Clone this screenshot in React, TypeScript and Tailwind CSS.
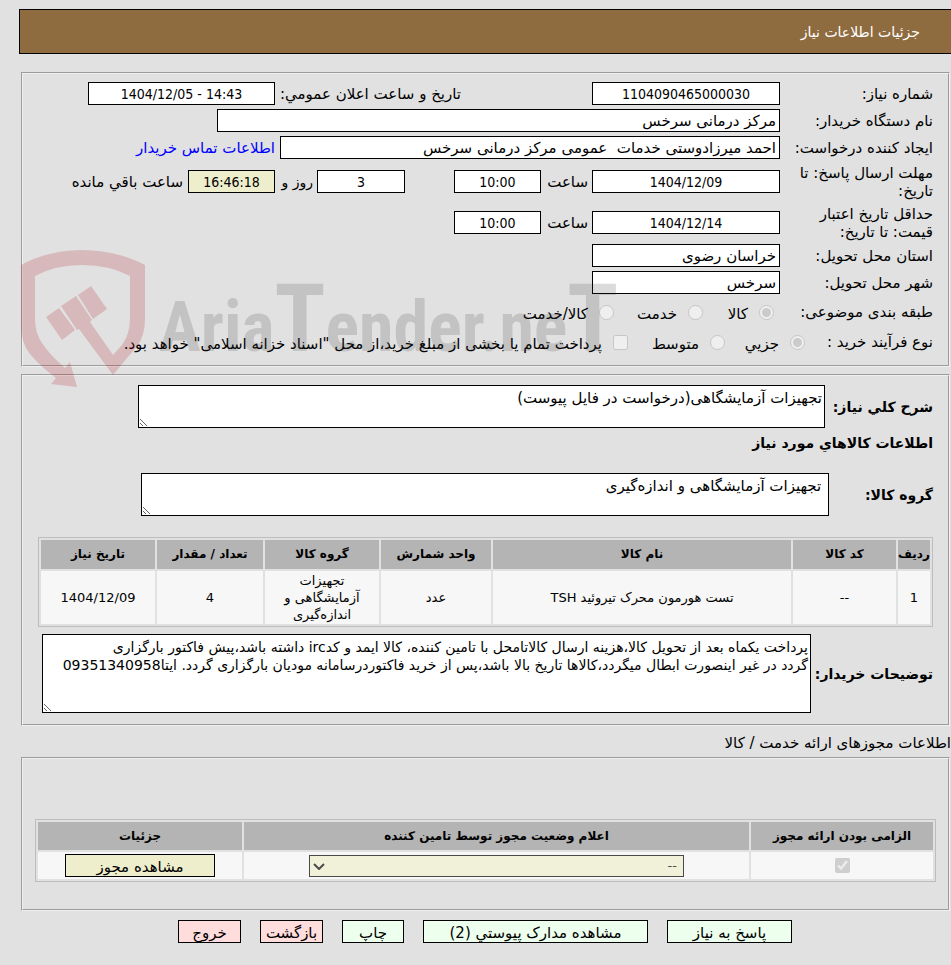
import type { ReactNode } from 'react'

const GOODS_COLUMNS = [
  { label: 'ردیف', width: 'w-[32px]' },
  { label: 'کد کالا', width: 'w-[103px]' },
  { label: 'نام کالا', width: '' },
  { label: 'واحد شمارش', width: 'w-[110px]' },
  { label: 'گروه کالا', width: 'w-[114px]' },
  { label: 'تعداد / مقدار', width: 'w-[106px]' },
  { label: 'تاریخ نیاز', width: 'w-[114px]' },
]

const GOODS_ROWS = [
  ['1', '--', 'تست هورمون محرک تیروئید TSH', 'عدد', 'تجهیزات آزمایشگاهی و اندازه‌گیری', '4', '1404/12/09'],
]

const BUYER_NOTES = `پرداخت یکماه بعد از تحویل کالا،هزینه ارسال کالاتامحل با تامین کننده، کالا ایمد و کدirc داشته باشد،پیش فاکتور بارگزاری
گردد در غیر اینصورت ابطال میگردد،کالاها تاریخ بالا باشد،پس از خرید فاکتوردرسامانه مودیان بارگزاری گردد. ایتا09351340958`

const ACTIONS = [
  { label: 'پاسخ به نیاز', style: 'w-[125px] bg-[#edffed]' },
  { label: 'مشاهده مدارک پیوستي (2)', style: 'w-[225px] bg-[#edffed]' },
  { label: 'چاپ', style: 'w-[62px] bg-[#edffed]' },
  { label: 'بازگشت', style: 'w-[63px] bg-[#ffdddd]' },
  { label: 'خروج', style: 'w-[63px] bg-[#ffdddd]' },
]

const field = 'h-[23px] border border-black bg-white px-[3px]'
const numeric = "h-[23px] border border-black text-center font-['DejaVu_Sans_Condensed','DejaVu_Sans',sans-serif] text-[14px]"
const area = 'block border border-black bg-white px-[2px] pt-[3px] leading-[18px]'

function Section({ className, children }: { className: string; children: ReactNode }) {
  return (
    <fieldset className={`mr-[1px] ml-[2px] border-2 border-[#f0f0f0] [border-style:groove] ${className}`}>
      {children}
    </fieldset>
  )
}

function Row({ id, label, className, children }: { id: string; label: string; className: string; children: ReactNode }) {
  return (
    <div className={`flex items-center ${className}`}>
      <label htmlFor={id} className="w-[153px] shrink-0 leading-[18px]">
        <span className="block w-[140px]">{label}</span>
      </label>
      {children}
    </div>
  )
}

function Choice({ name, label, checked, type = 'radio', className }: {
  name: string
  label: string
  checked?: boolean
  type?: 'radio' | 'checkbox'
  className: string
}) {
  return (
    <label className={`flex items-center gap-[11px] whitespace-nowrap ${className}`}>
      <input type={type} name={name} defaultChecked={checked} disabled className="size-[15px] shrink-0" />
      <span className="pt-[4px]">{label}</span>
    </label>
  )
}

function Watermark() {
  return (
    <svg
      className="pointer-events-none absolute top-[178px] left-[2px] h-[138px] w-[600px] overflow-visible"
      viewBox="0 0 600 138"
      aria-hidden="true"
    >
      <g fill="#b01e28" opacity="0.2">
        <path d="M0 15 Q28 0 61 0 Q95 0 124 15 V68 Q124 86 116 96 L92 125 L58 79 L56 80 L40 56 L55 46 L71 70 L69 72 L92 105 L101 95 Q109 84 109 68 V26 Q88 15 61 15 Q34 15 14 26 V68 Q14 83 21 93 Q28 104 44 118 L49 112 L56 137 L30 134 L35 128 Q18 115 9 104 Q0 93 0 76 Z" />
        <path d="M25 67L38 58L54 80L41 90Z M57 45L70 36L86 59L72 69Z" />
      </g>
      <text
        x="138"
        y="101"
        fill="#333333"
        opacity="0.17"
        fontFamily="'Roboto Condensed', Roboto, 'Liberation Sans', sans-serif"
        fontWeight="bold"
        fontSize="70"
        direction="ltr"
      >
        Aria<tspan fontSize="94">T</tspan>ender.ne<tspan fontSize="94">T</tspan>
      </text>
    </svg>
  )
}

export default function App() {
  return (
    <div
      dir="rtl"
      className="min-h-screen overflow-hidden bg-[#e1e1e1] pt-[9px] pb-[22px] pl-[19px] font-['DejaVu_Sans',sans-serif] text-[15px] leading-[18px] text-black"
    >
      <header className="flex h-[45px] items-center border border-r-0 border-black bg-[#8f6c40] pr-[31px] text-white">
        <h1 className="text-[14px]">جزئیات اطلاعات نیاز</h1>
      </header>

      <div className="relative mt-[18px]">
        <Section className="h-[295px] pt-[8px] pr-[15px] whitespace-nowrap">
          <Row id="need-no" label="شماره نیاز:" className="mb-[4px]">
            <input id="need-no" readOnly defaultValue="1104090465000030" className={`${numeric} w-[188px] bg-white`} />
            <label htmlFor="announced" className="mr-[131px] w-[186px]">تاریخ و ساعت اعلان عمومي:</label>
            <input id="announced" readOnly dir="ltr" defaultValue="1404/12/05 - 14:43" className={`${numeric} w-[187px] bg-white`} />
          </Row>
          <Row id="buyer" label="نام دستگاه خریدار:" className="mb-[4px]">
            <input id="buyer" readOnly defaultValue="مرکز درمانی سرخس" className={`${field} w-[563px]`} />
          </Row>
          <Row id="creator" label="ایجاد کننده درخواست:" className="mb-[4px]">
            <input id="creator" readOnly defaultValue="احمد میرزادوستی خدمات  عمومی مرکز درمانی سرخس" className={`${field} w-[500px]`} />
            <a href="#contact" className="mr-[5px] text-[#0000ff]">اطلاعات تماس خریدار</a>
          </Row>
          <Row id="deadline" label="مهلت ارسال پاسخ: تا تاریخ:" className="mb-[4px] h-[37px] whitespace-normal">
            <input id="deadline" readOnly defaultValue="1404/12/09" className={`${numeric} w-[188px] bg-white`} />
            <label htmlFor="deadline-time" className="mr-[4px] w-[47px]">ساعت</label>
            <input id="deadline-time" readOnly defaultValue="10:00" className={`${numeric} w-[87px] bg-white`} />
            <input id="days" readOnly defaultValue="3" className={`${numeric} mr-[49px] w-[88px] bg-white`} />
            <label htmlFor="days" className="mr-[4px] w-[38px] text-[14px] whitespace-nowrap">روز و</label>
            <input id="left" readOnly defaultValue="16:46:18" className={`${numeric} w-[87px] bg-[#eeeecc]`} />
            <label htmlFor="left" className="mr-[5px] whitespace-nowrap">ساعت باقي مانده</label>
          </Row>
          <Row id="valid" label="حداقل تاریخ اعتبار قیمت: تا تاریخ:" className="mb-[3px] h-[37px] whitespace-normal">
            <input id="valid" readOnly defaultValue="1404/12/14" className={`${numeric} w-[188px] bg-white`} />
            <label htmlFor="valid-time" className="mr-[4px] w-[47px]">ساعت</label>
            <input id="valid-time" readOnly defaultValue="10:00" className={`${numeric} w-[87px] bg-white`} />
          </Row>
          <Row id="province" label="استان محل تحویل:" className="mb-[4px]">
            <input id="province" readOnly defaultValue="خراسان رضوی" className={`${field} w-[188px]`} />
          </Row>
          <Row id="city" label="شهر محل تحویل:" className="mb-[3px]">
            <input id="city" readOnly defaultValue="سرخس" className={`${field} w-[188px]`} />
          </Row>
          <div role="group" aria-label="طبقه بندی موضوعی" className="flex h-[30px] items-center">
            <span className="w-[159px]">طبقه بندی موضوعی:</span>
            <Choice name="subject" label="کالا" checked className="w-[71px]" />
            <Choice name="subject" label="خدمت" className="w-[89px]" />
            <Choice name="subject" label="کالا/خدمت" className="" />
          </div>
          <div role="group" aria-label="نوع فرآیند خرید" className="flex h-[30px] items-center">
            <span className="w-[128px]">نوع فرآیند خرید :</span>
            <Choice name="process" label="جزیي" checked className="w-[80px]" />
            <Choice name="process" label="متوسط" className="w-[97px]" />
            <Choice
              name="treasury"
              type="checkbox"
              label={'پرداخت تمام یا بخشی از مبلغ خرید،از محل "اسناد خزانه اسلامی" خواهد بود.'}
              className=""
            />
          </div>
        </Section>
        <Watermark />
      </div>

      <Section className="mt-[7px] pt-[9px] pr-[15px] pb-[11px]">
        <div className="flex items-center">
          <label htmlFor="summary" className="w-[108px] shrink-0 text-[14px] font-bold">شرح کلي نیاز:</label>
          <textarea id="summary" readOnly defaultValue="تجهیزات آزمایشگاهی(درخواست در فایل پیوست)" className={`${area} ml-[115px] h-[43px] min-w-0 flex-1`} />
        </div>
        <h2 className="mt-[6px] text-[14px] font-bold">اطلاعات کالاهاي مورد نیاز</h2>
        <div className="mt-[21px] flex items-center">
          <label htmlFor="group" className="w-[104px] shrink-0 text-[14px] font-bold">گروه کالا:</label>
          <textarea id="group" readOnly defaultValue=" تجهیزات آزمایشگاهی و اندازه‌گیری" className={`${area} ml-[118px] h-[43px] min-w-0 flex-1`} />
        </div>
        <div className="mt-[21px] pl-[15px]">
          <table className="w-full table-fixed border-separate border-spacing-[2px] border border-[#bdbdbd] text-center leading-[17px]">
            <thead>
              <tr className="h-[29px] bg-[#b4b4b4] text-[12px]">
                {GOODS_COLUMNS.map(({ label, width }) => (
                  <th key={label} className={`whitespace-nowrap p-0 ${width}`}>{label}</th>
                ))}
              </tr>
            </thead>
            <tbody>
              {GOODS_ROWS.map((row) => (
                <tr key={row[0]} className="h-[53px] bg-[#f7f7f7] text-[13px]">
                  {row.map((cell, i) => (
                    <td key={i} className="px-[6px] py-[1px]">{cell}</td>
                  ))}
                </tr>
              ))}
            </tbody>
          </table>
        </div>
        <div className="mt-[7px] flex items-center">
          <label htmlFor="notes" className="w-[122px] shrink-0 text-[14px] font-bold">توضیحات خریدار:</label>
          <textarea id="notes" readOnly defaultValue={BUYER_NOTES} className={`${area} ml-[19px] h-[79px] min-w-0 flex-1 text-[14px]`} />
        </div>
      </Section>

      <h2 className="mt-[8px] mb-[5px]">اطلاعات مجوزهای ارائه خدمت / کالا</h2>

      <Section className="pt-[60px] pr-[12px] pb-[27px] pl-[12px]">
        <table className="w-full table-fixed border-separate border-spacing-[2px] border border-[#bdbdbd] text-center text-[12px]">
          <thead>
            <tr className="h-[28px] bg-[#b4b4b4]">
              <th className="w-[182px] p-0">الزامی بودن ارائه مجوز</th>
              <th className="p-0">اعلام وضعیت مجوز توسط تامین کننده</th>
              <th className="w-[204px] p-0">جزئیات</th>
            </tr>
          </thead>
          <tbody>
            <tr className="h-[27px] bg-[#f7f7f7]">
              <td className="p-0">
                <input type="checkbox" defaultChecked disabled aria-label="الزامی بودن ارائه مجوز" className="mx-auto block size-[15px]" />
              </td>
              <td className="p-0">
                <div className="relative mr-[65px] ml-[65px]">
                  <select aria-label="اعلام وضعیت مجوز" className="block h-[22px] w-full appearance-none border border-[#4a4a4a] bg-[#f1f1da] px-[6px] text-[13px] text-[#4a4a4a]">
                    <option>--</option>
                  </select>
                  <svg className="pointer-events-none absolute top-[8px] left-[4px] h-[7px] w-[12px]" viewBox="0 0 12 7" fill="none" stroke="#4a4a4a" strokeWidth="2">
                    <path d="M1 1l5 5 5-5" />
                  </svg>
                </div>
              </td>
              <td className="p-0">
                <button type="button" className="mx-auto block h-[23px] w-[150px] border border-black bg-[#eeeecc] pt-[2px] text-[15px]">مشاهده مجوز</button>
              </td>
            </tr>
          </tbody>
        </table>
      </Section>

      <div className="mt-[9px] flex justify-center gap-[19px]">
        {ACTIONS.map(({ label, style }) => (
          <button key={label} type="button" className={`h-[23px] border border-black pt-[2px] whitespace-nowrap ${style}`}>
            {label}
          </button>
        ))}
      </div>
    </div>
  )
}
